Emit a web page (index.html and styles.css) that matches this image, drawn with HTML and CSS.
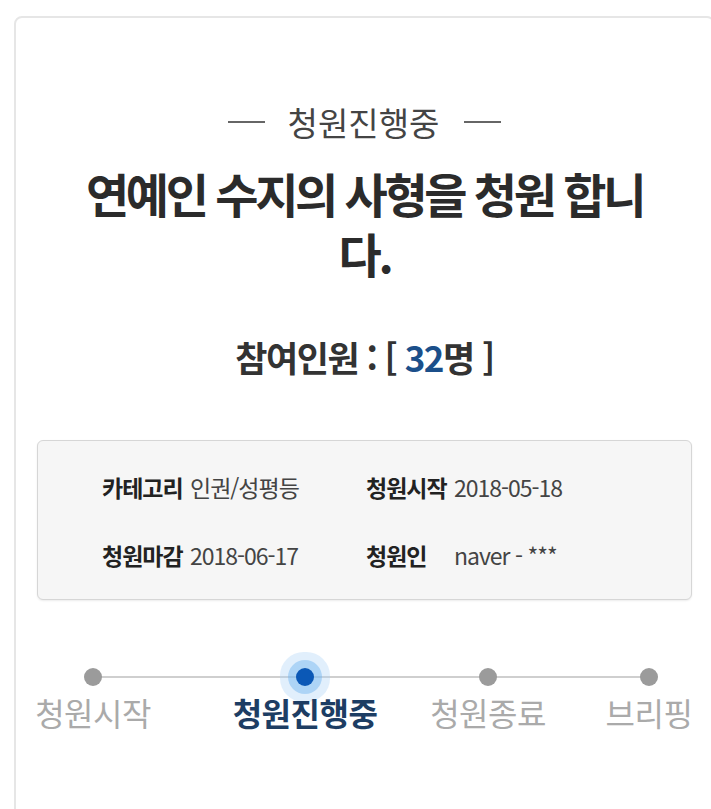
FILE: index.html
```html
<!DOCTYPE html>
<html lang="ko">
<head>
<meta charset="utf-8">
<title>청원진행중</title>
<link rel="stylesheet" href="styles.css">
</head>
<body>
<div class="card">
  <p class="status">청원진행중</p>
  <h1 class="title">연예인 수지의 사형을 청원 합니다.</h1>
  <p class="count">참여인원 : [ <span class="num">32</span>명 ]</p>
  <div class="info">
    <div class="cell"><span class="label">카테고리</span><span class="value">인권/성평등</span></div>
    <div class="cell"><span class="label">청원시작</span><span class="value">2018-05-18</span></div>
    <div class="cell"><span class="label">청원마감</span><span class="value">2018-06-17</span></div>
    <div class="cell"><span class="label">청원인</span><span class="value">naver - ***</span></div>
  </div>
  <div class="steps">
    <div class="step"><span class="dot"></span><span class="step-label">청원시작</span></div>
    <div class="step active"><span class="dot"></span><span class="step-label">청원진행중</span></div>
    <div class="step"><span class="dot"></span><span class="step-label">청원종료</span></div>
    <div class="step"><span class="dot"></span><span class="step-label">브리핑</span></div>
  </div>
</div>
</body>
</html>
```
FILE: styles.css
```css
html, body {
  margin: 0;
  padding: 0;
  background: #ffffff;
  overflow: hidden;
}
body {
  font-family: "Noto Sans CJK KR", "Noto Sans", sans-serif;
  color: #333;
}
.card {
  box-sizing: border-box;
  width: 701px;
  min-height: 900px;
  margin: 16px 0 0 14px;
  border: 2px solid #e6e6e6;
  border-radius: 8px;
  padding: 84px 21px 0;
}
.status {
  margin: 0;
  text-align: center;
  font-size: 33px;
  line-height: 40px;
  color: #444;
  display: flex;
  justify-content: center;
  align-items: center;
}
.status::before,
.status::after {
  content: "";
  display: block;
  width: 37px;
  height: 2px;
  background: #666;
}
.status::before { margin-right: 23px; }
.status::after { margin-left: 25px; }
.title {
  margin: 21px auto 0;
  max-width: 580px;
  text-align: center;
  font-size: 47px;
  line-height: 60px;
  font-weight: 700;
  letter-spacing: -3.4px;
  color: #2b2b2b;
}
.count {
  margin: 54px 0 0;
  text-align: center;
  font-size: 35px;
  line-height: 40px;
  font-weight: 700;
  letter-spacing: -1.5px;
  color: #333;
}
.num { color: #1b4f8a; }
.info {
  margin-top: 63px;
  box-sizing: border-box;
  height: 160px;
  background: #f6f6f6;
  border: 1px solid #d6d6d6;
  border-radius: 6px;
  box-shadow: 0 1px 2px rgba(0,0,0,0.08);
  padding: 31px 0 0 64px;
  display: grid;
  grid-template-columns: 264px 1fr;
  row-gap: 38px;
  align-content: start;
}
.cell {
  display: flex;
  align-items: center;
  font-size: 23px;
  line-height: 30px;
  letter-spacing: -1px;
}
.label {
  font-weight: 700;
  color: #222;
  width: 88px;
  flex: none;
}
.value {
  color: #444;
}
.steps {
  position: relative;
  margin-top: 68px;
  display: grid;
  grid-template-columns: 112px 82px 148px 53px 112px 62px 86px;
}
.steps::before {
  content: "";
  position: absolute;
  top: 8px;
  left: 55px;
  right: 42px;
  height: 2px;
  background: #cfcfcf;
}
.step {
  position: relative;
  display: flex;
  flex-direction: column;
  align-items: center;
  white-space: nowrap;
}
.step:nth-child(2) { grid-column: 3; }
.step:nth-child(3) { grid-column: 5; }
.step:nth-child(4) { grid-column: 7; }
.dot {
  width: 18px;
  height: 18px;
  border-radius: 50%;
  background: #9b9b9b;
}
.step-label {
  margin-top: 8px;
  font-size: 32px;
  line-height: 36px;
  color: #aaaaaa;
  letter-spacing: -0.5px;
}
.step.active .dot {
  background: #0b58b6;
  box-shadow: 0 0 0 8px rgba(110, 180, 240, 0.45), 0 0 0 16px rgba(170, 210, 245, 0.35);
}
.step.active .step-label {
  font-weight: 700;
  color: #1d3d63;
}
```
